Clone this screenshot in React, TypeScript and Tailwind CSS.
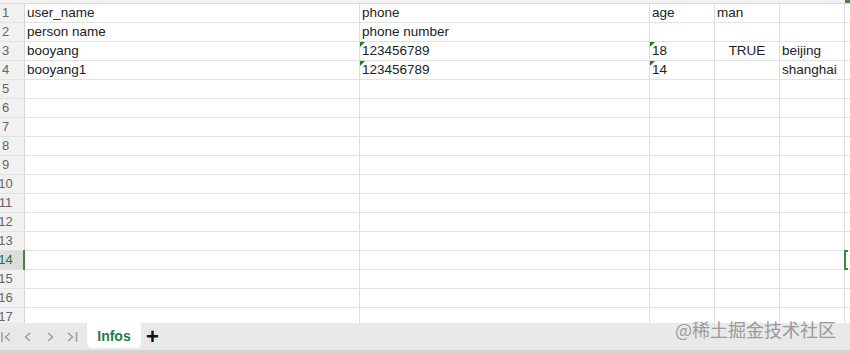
const rows: { cells: (string | { v: string; tri?: boolean; center?: boolean })[] }[] = [
  { cells: ["user_name", "phone", "age", "man", ""] },
  { cells: ["person name", "phone number", "", "", ""] },
  { cells: ["booyang", { v: "123456789", tri: true }, { v: "18", tri: true }, { v: "TRUE", center: true }, "beijing"] },
  { cells: ["booyang1", { v: "123456789", tri: true }, { v: "14", tri: true }, "", "shanghai"] },
]

const widths = ["w-[335px]", "w-[290px]", "w-[65px]", "w-[65px]", "w-[65px]"]

function Cell({ c, w }: { c: string | { v: string; tri?: boolean; center?: boolean }; w: string }) {
  const v = typeof c === "string" ? c : c.v
  const tri = typeof c !== "string" && c.tri
  const center = typeof c !== "string" && c.center
  return (
    <div className={`relative ${w} shrink-0 border-r border-[#dedede] px-[2px] leading-[18px] whitespace-nowrap ${center ? "text-center" : ""}`}>
      {tri && (
        <span className="absolute left-0 top-0 h-0 w-0 border-t-[5px] border-r-[5px] border-t-[#217a2c] border-r-transparent" />
      )}
      {v}
    </div>
  )
}

export default function App() {
  const all = Array.from({ length: 17 }, (_, i) => i)
  return (
    <div className="relative flex h-[353px] w-[850px] flex-col overflow-hidden bg-white text-[13.5px] text-[#222]" style={{ fontFamily: '"Liberation Sans", Arial, sans-serif' }}>
      <div className="flex-1 overflow-hidden">
        <div className="flex h-[4px] border-b border-[#dcdcdc] bg-[#f2f2f2]">
          <div className="flex-1" />
          <div className="w-[5px] bg-[#3f8a3a]" />
        </div>
        {all.map((i) => {
          const r = rows[i]
          const sel = i === 13
          return (
            <div key={i} className="flex h-[19px] border-b border-[#e2e2e2]">
              <div className={`w-[25px] shrink-0 overflow-hidden border-r border-[#d6d6d6] text-[13px] ${sel ? "bg-[#dddddd] text-[#217346]" : "bg-[#f1f1f1] text-[#666]"}`}>
                <div className="-ml-[5px] w-[21px] text-center leading-[18px]">{i + 1}</div>
              </div>
              <div className={`flex flex-1 ${sel ? "relative" : ""}`}>
                {widths.map((w, j) => (
                  <Cell key={j} w={w} c={r ? r.cells[j] : ""} />
                ))}
                <div className="flex-1" />
                {sel && (
                  <>
                    <span className="absolute -left-[2px] -top-[1px] h-[20px] w-[2px] bg-[#3f8a3a]" />
                    <span className="absolute left-[819px] -top-[1px] h-[20px] w-[4px] border-y-[2px] border-l-[2px] border-[#3f8a3a]" />
                  </>
                )}
              </div>
            </div>
          )
        })}
      </div>
      <div className="flex h-[30px] shrink-0 items-start border-b-[3px] border-[#d4d4d4] bg-[#e9e9e9]">
        <div className="flex h-[27px] items-center text-[#a0a0a0]">
          <svg width="14" height="12" viewBox="0 0 14 12" fill="none" stroke="currentColor" strokeWidth="1.6">
            <path d="M2 1v10M10 2L5.5 6 10 10" />
          </svg>
          <svg width="10" height="12" viewBox="0 0 10 12" className="ml-[9px]" fill="none" stroke="currentColor" strokeWidth="1.6">
            <path d="M7 2L2.5 6 7 10" />
          </svg>
          <svg width="10" height="12" viewBox="0 0 10 12" className="ml-[12px]" fill="none" stroke="currentColor" strokeWidth="1.6">
            <path d="M3 2l4.5 4L3 10" />
          </svg>
          <svg width="14" height="12" viewBox="0 0 14 12" className="ml-[10px]" fill="none" stroke="currentColor" strokeWidth="1.6">
            <path d="M3 2l4.5 4L3 10M11.5 1v10" />
          </svg>
        </div>
        <div className="ml-[8px] flex h-[25px] w-[54px] items-center justify-center rounded-b-[5px] bg-white pt-[2px] text-[14px] font-semibold text-[#1f7a4d]">
          Infos
        </div>
        <div className="ml-[5px] flex h-[27px] items-center text-[22px] font-bold leading-none text-[#111]">+</div>
      </div>
      <div className="pointer-events-none absolute bottom-[14px] right-[14px] text-[18px] leading-[20px] text-[#9a9a9a]" style={{ fontFamily: '"Noto Sans CJK SC", sans-serif' }}>
        @稀土掘金技术社区
      </div>
    </div>
  )
}
